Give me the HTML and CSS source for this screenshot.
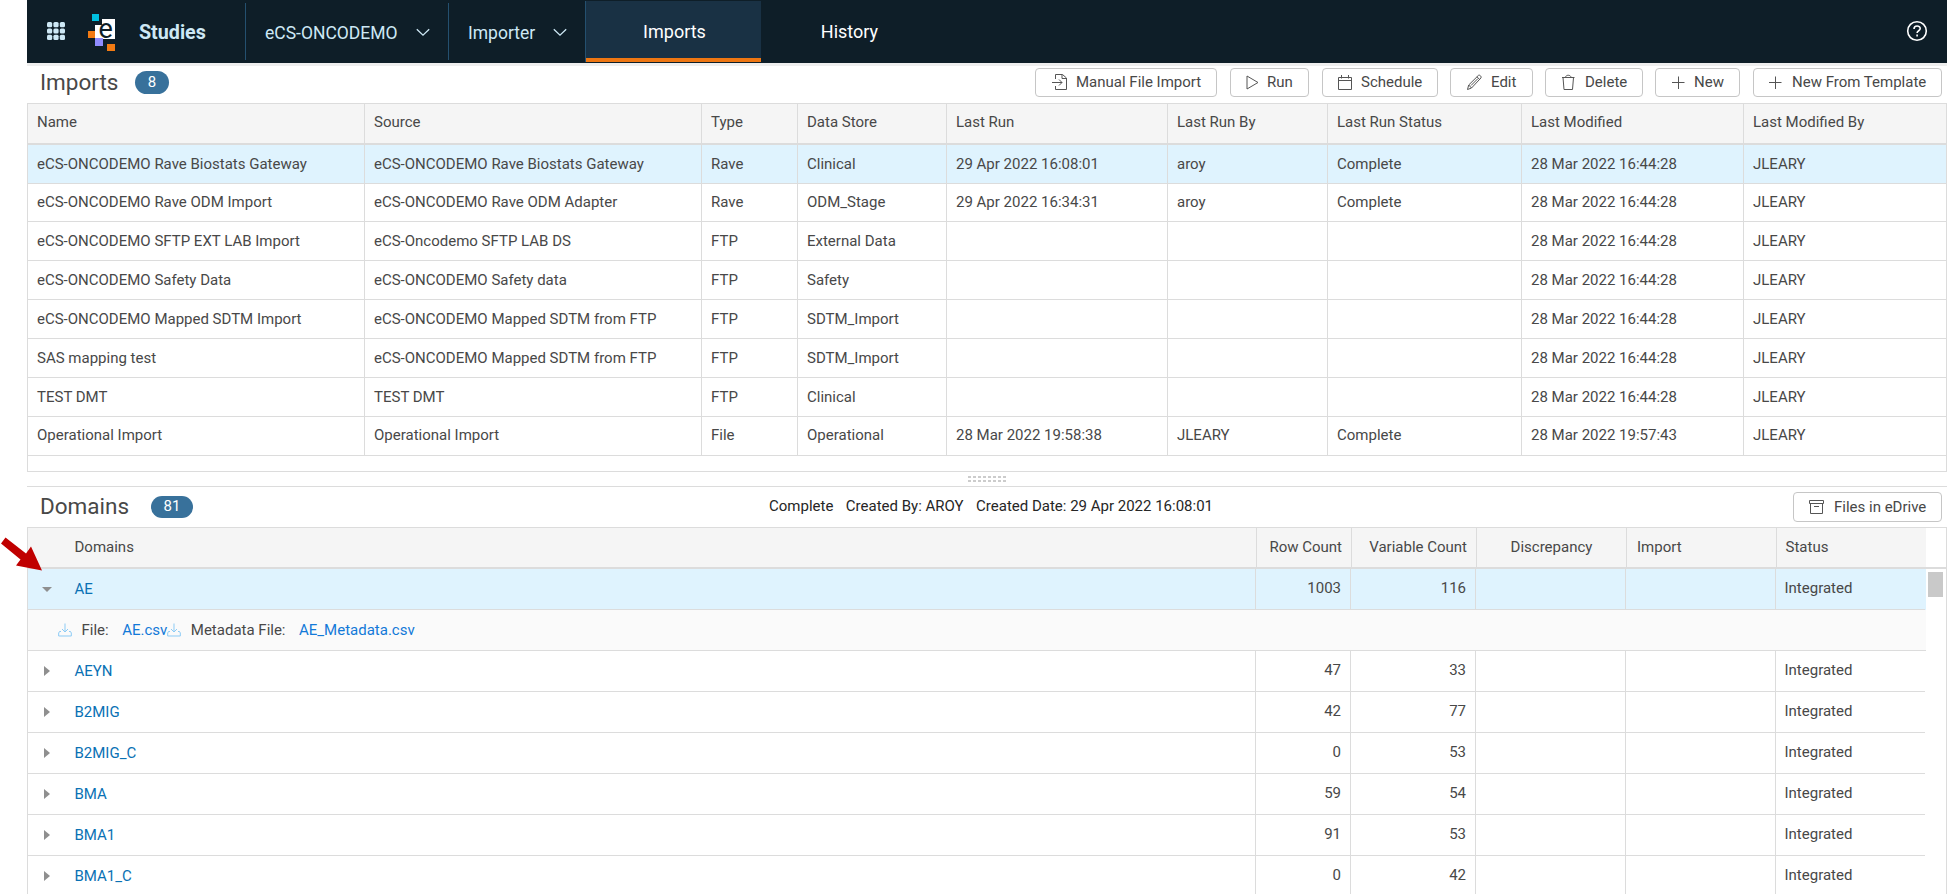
FILE: index.html
```html
<!DOCTYPE html>
<html lang="en">
<head>
  <meta charset="UTF-8" />
  <meta name="viewport" content="width=device-width, initial-scale=1.0" />
  <title>Studies - Imports</title>
  <link rel="stylesheet" href="styles.css">
</head>
<body>
  <header class="topbar">
    <svg class="apps" width="18" height="18" viewBox="0 0 18 18">
      <rect x="0" y="0" width="5.2" height="5.2" rx="1.5"/><rect x="6.4" y="0" width="5.2" height="5.2" rx="1.5"/><rect x="12.8" y="0" width="5.2" height="5.2" rx="1.5"/>
      <rect x="0" y="6.4" width="5.2" height="5.2" rx="1.5"/><rect x="6.4" y="6.4" width="5.2" height="5.2" rx="1.5"/><rect x="12.8" y="6.4" width="5.2" height="5.2" rx="1.5"/>
      <rect x="0" y="12.8" width="5.2" height="5.2" rx="1.5"/><rect x="6.4" y="12.8" width="5.2" height="5.2" rx="1.5"/><rect x="12.8" y="12.8" width="5.2" height="5.2" rx="1.5"/>
    </svg>
    <svg class="logo" width="28" height="38" viewBox="0 0 28 38">
      <rect x="4" y="0" width="7" height="7" fill="#00bfdf"/>
      <path d="M14 5h13v20H7V11h7z" fill="#fff"/>
      <rect x="0" y="17" width="7" height="7" fill="#f27b13"/>
      <rect x="7" y="24" width="8" height="8" fill="#8f8cff"/>
      <rect x="19" y="30" width="8" height="7" fill="#f27b13"/>
      <text x="10.5" y="23.5" font-size="27" fill="#0e1e28">e</text>
    </svg>
    <div class="product">Studies</div>
    <div class="picker study">eCS-ONCODEMO <svg width="14" height="9" viewBox="0 0 14 9"><path d="M.8 1.2 7 7.2l6.200-6"/></svg></div>
    <div class="picker module">Importer <svg width="14" height="9" viewBox="0 0 14 9"><path d="M.8 1.2 7 7.2l6.200-6"/></svg></div>
    <nav>
      <a class="active">Imports</a>
      <a>History</a>
    </nav>
    <svg class="help" width="22" height="22" viewBox="0 0 22 22">
      <circle cx="11" cy="11" r="9.300"/>
      <path d="M8 9c0-4 6.200-3.800 6.200-.5 0 2.300-3.100 2.200-3.100 4.500"/>
      <path d="M11.100 14.600v2"/>
    </svg>
  </header>

  <main>
    <section class="panel-head imports-head">
      <h2>Imports</h2>
      <span class="badge">8</span>
      <div class="toolbar">
        <button class="btn b-manual"><svg width="18" height="18" viewBox="0 0 18 18"><path d="M4.500 6V1.500h7L15.500 5v11.500h-11V13M11 1.500V5.500h4.500M1 9.500h10M8 6.500l3 3-3 3"/></svg>Manual File Import</button>
        <button class="btn b-run"><svg width="18" height="18" viewBox="0 0 18 18"><path d="M1 3v13l11-6.500z"/></svg>Run</button>
        <button class="btn b-schedule"><svg width="18" height="18" viewBox="0 0 18 18"><path d="M.5 4.500h13v12H.5zM.5 7.500h13M3.500 2v3.500M10.500 2v3.500"/></svg>Schedule</button>
        <button class="btn b-edit"><svg width="18" height="18" viewBox="0 0 18 18"><path d="M1.500 16.500l1.200-4.500L12.500 2.300c1-.8 3.300 1.200 2.500 2.600L5.500 15zM2.700 12 5.500 15M11 3.800l2.700 2.800M5 12.500 12 5.500"/></svg>Edit</button>
        <button class="btn b-delete"><svg width="18" height="18" viewBox="0 0 18 18"><path d="M1 4.500h12.500M4.500 4.500c0-3 5.500-3 5.500 0M2 4.500l1 12h8.500l1-12"/></svg>Delete</button>
        <button class="btn b-new"><svg width="18" height="18" viewBox="0 0 18 18"><path d="M1 9.500h12.500M7.500 3.500v12.500"/></svg>New</button>
        <button class="btn b-template"><svg width="18" height="18" viewBox="0 0 18 18"><path d="M0 9.500h12.500M6.500 3.500v12.500"/></svg>New From Template</button>
      </div>
    </section>

    <div class="grid imports">
      <div class="row head"><span>Name</span><span>Source</span><span>Type</span><span>Data Store</span><span>Last Run</span><span>Last Run By</span><span>Last Run Status</span><span>Last Modified</span><span>Last Modified By</span></div>
      <div class="row selected"><span>eCS-ONCODEMO Rave Biostats Gateway</span><span>eCS-ONCODEMO Rave Biostats Gateway</span><span>Rave</span><span>Clinical</span><span>29 Apr 2022 16:08:01</span><span>aroy</span><span>Complete</span><span>28 Mar 2022 16:44:28</span><span>JLEARY</span></div>
      <div class="row short"><span>eCS-ONCODEMO Rave ODM Import</span><span>eCS-ONCODEMO Rave ODM Adapter</span><span>Rave</span><span>ODM_Stage</span><span>29 Apr 2022 16:34:31</span><span>aroy</span><span>Complete</span><span>28 Mar 2022 16:44:28</span><span>JLEARY</span></div>
      <div class="row"><span>eCS-ONCODEMO SFTP EXT LAB Import</span><span>eCS-Oncodemo SFTP LAB DS</span><span>FTP</span><span>External Data</span><span></span><span></span><span></span><span>28 Mar 2022 16:44:28</span><span>JLEARY</span></div>
      <div class="row"><span>eCS-ONCODEMO Safety Data</span><span>eCS-ONCODEMO Safety data</span><span>FTP</span><span>Safety</span><span></span><span></span><span></span><span>28 Mar 2022 16:44:28</span><span>JLEARY</span></div>
      <div class="row"><span>eCS-ONCODEMO Mapped SDTM Import</span><span>eCS-ONCODEMO Mapped SDTM from FTP</span><span>FTP</span><span>SDTM_Import</span><span></span><span></span><span></span><span>28 Mar 2022 16:44:28</span><span>JLEARY</span></div>
      <div class="row"><span>SAS mapping test</span><span>eCS-ONCODEMO Mapped SDTM from FTP</span><span>FTP</span><span>SDTM_Import</span><span></span><span></span><span></span><span>28 Mar 2022 16:44:28</span><span>JLEARY</span></div>
      <div class="row"><span>TEST DMT</span><span>TEST DMT</span><span>FTP</span><span>Clinical</span><span></span><span></span><span></span><span>28 Mar 2022 16:44:28</span><span>JLEARY</span></div>
      <div class="row last"><span>Operational Import</span><span>Operational Import</span><span>File</span><span>Operational</span><span>28 Mar 2022 19:58:38</span><span>JLEARY</span><span>Complete</span><span>28 Mar 2022 19:57:43</span><span>JLEARY</span></div>
    </div>

    <div class="splitter"><i></i><i></i><i></i><i></i><i></i><i></i><i></i><i></i></div>

    <section class="panel-head domains-head">
      <h2>Domains</h2>
      <span class="badge">81</span>
      <div class="run-info"><span>Complete</span><span>Created By: AROY</span><span>Created Date: 29 Apr 2022 16:08:01</span></div>
      <button class="btn b-files"><svg width="18" height="18" viewBox="0 0 18 18"><path d="M.5 2.500h14v3h-14zM1.500 5.500v10h12v-10M5 8.500h5"/></svg>Files in eDrive</button>
    </section>

    <div class="grid domains">
      <div class="row head"><span></span><span>Domains</span><span class="num">Row Count</span><span class="num">Variable Count</span><span class="mid">Discrepancy</span><span class="import">Import</span><span>Status</span><span class="filler"></span></div>
      <div class="body">
        <div class="rows">
          <div class="row selected"><span class="toggle open"></span><a>AE</a><span class="num">1003</span><span class="num">116</span><span></span><span></span><span>Integrated</span></div>
          <div class="detail">
            <svg width="14" height="14" viewBox="0 0 14 14"><path d="M7 .5v8M4 6l3 3 3-3M3 8.500H1.500L.7 10v3h12.600v-3l-.8-1.500H11"/></svg>
            <span class="label">File:</span><a class="file">AE.csv</a>
            <svg width="14" height="14" viewBox="0 0 14 14"><path d="M7 .5v8M4 6l3 3 3-3M3 8.500H1.500L.7 10v3h12.600v-3l-.8-1.500H11"/></svg>
            <span class="label">Metadata File:</span><a class="file">AE_Metadata.csv</a>
          </div>
          <div class="row"><span class="toggle"></span><a>AEYN</a><span class="num">47</span><span class="num">33</span><span></span><span></span><span>Integrated</span></div>
          <div class="row"><span class="toggle"></span><a>B2MIG</a><span class="num">42</span><span class="num">77</span><span></span><span></span><span>Integrated</span></div>
          <div class="row"><span class="toggle"></span><a>B2MIG_C</a><span class="num">0</span><span class="num">53</span><span></span><span></span><span>Integrated</span></div>
          <div class="row"><span class="toggle"></span><a>BMA</a><span class="num">59</span><span class="num">54</span><span></span><span></span><span>Integrated</span></div>
          <div class="row"><span class="toggle"></span><a>BMA1</a><span class="num">91</span><span class="num">53</span><span></span><span></span><span>Integrated</span></div>
          <div class="row"><span class="toggle"></span><a>BMA1_C</a><span class="num">0</span><span class="num">42</span><span></span><span></span><span>Integrated</span></div>
        </div>
        <div class="scrollbar"><div class="thumb"></div></div>
      </div>
    </div>
  </main>

  <svg class="pointer" width="44" height="36" viewBox="0 0 44 36"><path d="M5.500 0.500 26 16.500 31 9.500 42 33.500 16 28.500 20.500 22.500 1 6.500z"/></svg>
</body>
</html>
```

FILE: styles.css
```css
* {
  box-sizing: border-box;
  margin: 0;
  padding: 0;
}
body {
  font-family: Roboto, "Liberation Sans", sans-serif;
  font-size: 15px;
  color: #484848;
  background: #fff;
  height: 894px;
  padding-left: 27px;
  overflow: hidden;
  position: relative;
}
svg {
  flex: none;
  fill: none;
}

/* top bar */
.topbar {
  display: flex;
  align-items: center;
  height: 63px;
  background: #0e1e28;
  color: #cde8f5;
  font-size: 18px;
}
.apps {
  fill: #cde8f5;
  margin: 0 23px 2px 20px;
}
.logo {
  margin-top: 2px;
}
.product {
  width: 129px;
  padding: 2px 0 0 23px;
  font-size: 19.7px;
  font-weight: bold;
}
.picker {
  display: flex;
  align-items: center;
  justify-content: space-between;
  height: 57px;
  border-left: 1px solid #24506f;
  padding: 3px 18px 0 19px;
  font-size: 17.5px;
}
.picker svg {
  margin-bottom: 2px;
  stroke: #cde8f5;
  stroke-width: 1.3;
}
.study {
  width: 203px;
}
.module {
  width: 137px;
}
nav {
  display: flex;
  height: 61px;
  color: #fff;
  border-left: 1px solid #24506f;
}
nav a {
  width: 175px;
  padding-left: 2px;
  text-align: center;
  line-height: 61px;
}
nav .active {
  background: #193144;
  border-bottom: 4px solid #ee7612;
}
.help {
  margin: 0 19px 2px auto;
  stroke: #fff;
  stroke-width: 1.600;
}

/* panel titles and buttons */
.panel-head {
  display: flex;
  align-items: center;
  padding-left: 13px;
}
.imports-head {
  height: 40px;
  padding-right: 5px;
  padding-bottom: 4px;
  border-top: 3px solid #eee;
}
.domains-head {
  height: 41px;
  border-top: 1px solid #dcdcdc;
  padding-right: 5px;
}
h2 {
  font-size: 22.5px;
  font-weight: normal;
  line-height: 26px;
  padding-bottom: 2px;
}
.imports-head h2 {
  width: 95px;
}
.domains-head h2 {
  width: 111px;
}
.badge {
  width: 34px;
  height: 23px;
  line-height: 22px;
  border-radius: 12px;
  background: #38719b;
  color: #fff;
  text-align: center;
}
.domains-head .badge {
  width: 42px;
  height: 22px;
  line-height: 20px;
}
.toolbar {
  display: flex;
  gap: 12px;
  margin-left: auto;
}
.btn {
  display: flex;
  align-items: center;
  gap: 7px;
  height: 29px;
  padding: 0 0 2px 15px;
  border: 1px solid #c6c6c6;
  border-radius: 4px;
  background: #fff;
  color: #484848;
  font: inherit;
  white-space: nowrap;
}
.btn svg {
  stroke: #555;
  stroke-width: 1;
}
.b-manual { width: 182px; margin-right: 1px; }
.b-run { width: 79px; margin-right: 1px; gap: 3px; }
.b-schedule { width: 116px; gap: 5px; }
.b-edit { width: 83px; }
.b-delete { width: 98px; gap: 6px; }
.b-new { width: 85px; margin-right: 1px; gap: 5px; }
.b-template { width: 189px; gap: 5px; }
.b-files { width: 149px; height: 30px; padding-bottom: 0; }
.run-info {
  display: flex;
  gap: 12.5px;
  margin: 0 auto 0 576px;
  padding-bottom: 2px;
  color: #262626;
}

/* grids */
.grid {
  border: 1px solid #dcdcdc;
}
.row {
  display: grid;
}
.row > * {
  padding: 0 9px;
  border-right: 1px solid #dcdcdc;
  border-bottom: 1px solid #dcdcdc;
  white-space: nowrap;
}
.row > :last-child {
  border-right: 0;
}
.row.head {
  background: #f5f5f5;
}
.row.head > * {
  border-bottom-width: 2px;
}
.selected {
  background: #dff3fe;
}
.imports {
  height: 369px;
}
.imports .row {
  grid-template-columns: 337px 337px 96px 149px 221px 160px 194px 222px 1fr;
  height: 39px;
  line-height: 38px;
}
.imports .head {
  height: 41px;
  line-height: 36px;
}
.imports .short {
  height: 38px;
  line-height: 37px;
}
.imports .last {
  line-height: 37px;
}

.splitter {
  display: flex;
  justify-content: center;
  gap: 2px;
  height: 14px;
  padding: 4px 0 0;
}
.splitter i {
  width: 3px;
  height: 6px;
  border-top: 2px solid #ccc;
  border-bottom: 2px solid #ccc;
}

.domains {
  border-bottom: 0;
}
.domains .row {
  grid-template-columns: 38px 1190px 95px 125px 150px 150px 149px;
  height: 41px;
  line-height: 39px;
}
.domains .head {
  grid-template-columns: 38px 1191px 95px 125px 150px 150px 149px 1fr;
  line-height: 38px;
}
.domains .row > :first-child {
  border-right: 0;
}
.domains .row > :nth-child(2),
.domains .row > :nth-child(7) {
  padding-left: 8.5px;
}
.domains .head .filler {
  background: #fff;
}
.domains .head > :nth-child(7) {
  border-right: 0;
}
.domains .head .import {
  padding-left: 10px;
}
.num {
  text-align: right;
}
.mid {
  text-align: center;
}
.domains .row a {
  color: #0a71b4;
  padding-top: 1px;
}
.body {
  display: flex;
  height: 325px;
}
.rows {
  width: 1898px;
}
.toggle {
  display: flex;
  align-items: center;
}
.toggle::before {
  content: "";
  margin-left: 7px;
  border-left: 6px solid #8f8f8f;
  border-top: 5px solid transparent;
  border-bottom: 5px solid transparent;
}
.toggle.open::before {
  margin-left: 5px;
  border-top: 5px solid #8f8f8f;
  border-left: 5px solid transparent;
  border-right: 5px solid transparent;
  border-bottom: 0;
}
.detail {
  display: flex;
  align-items: center;
  height: 41px;
  padding-left: 30px;
  background: #fafafa;
  border-bottom: 1px solid #dcdcdc;
}
.detail svg {
  stroke: #8ccbf5;
  margin-right: -1px;
}
.label {
  margin: 0 13.5px 0 10.5px;
}
.file {
  color: #1279d8;
}
.scrollbar {
  padding: 3px 0 0 2px;
}
.thumb {
  width: 15px;
  height: 25px;
  background: #c9c9c9;
}

/* red arrow over the page edge */
.pointer {
  position: absolute;
  left: 0;
  top: 537px;
  fill: #c00000;
}
```
